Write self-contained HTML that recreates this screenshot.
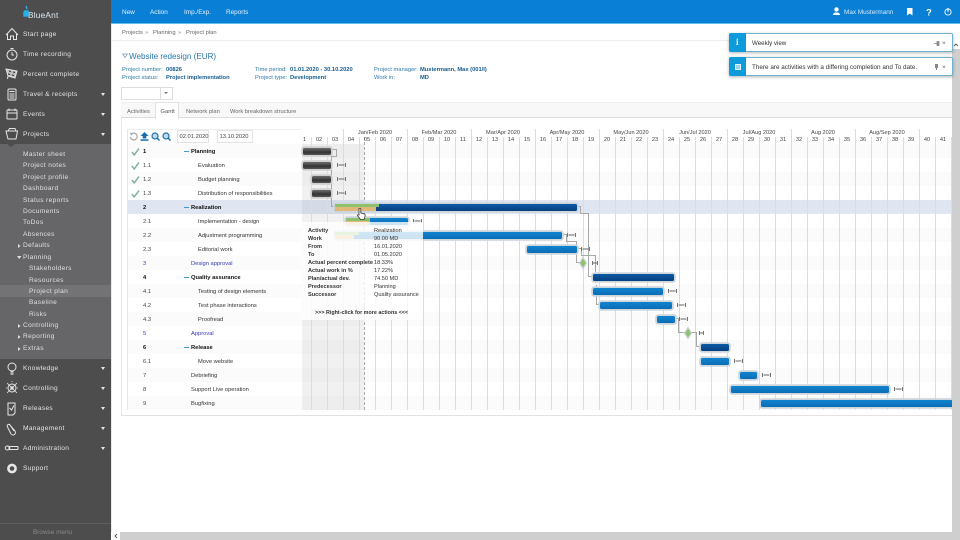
<!DOCTYPE html>
<html><head><meta charset="utf-8"><title>BlueAnt</title>
<style>
html,body{margin:0;padding:0;width:960px;height:540px;overflow:hidden;background:#fff;font-family:"Liberation Sans",sans-serif;}
#r{position:relative;width:960px;height:540px;overflow:hidden;}
.a,.t,.m,.s,.n,.l,.v,.w,.o,.b,.x{position:absolute;white-space:nowrap;}
.t{font-size:6.4px;line-height:8px;color:#333;}
.i{font-size:5.75px;margin-top:.5px}
.m{left:23px;font-size:6.6px;line-height:10px;color:#e4e4e4;letter-spacing:.32px;margin-top:1px}
.s{font-size:6.6px;line-height:10px;color:#e0e0e0;letter-spacing:.36px;margin-top:1px}
.c{position:absolute;left:101px;width:0;height:0;border-left:2.5px solid transparent;border-right:2.5px solid transparent;border-top:3px solid #dfeaf5;margin-top:1px}
.n{left:143px;font-size:5.8px;line-height:8px;color:#444;margin-top:1px}
.l{font-size:5.75px;line-height:8px;color:#333;margin-top:1px}
.h{font-weight:bold;color:#111;}
.p{color:#3838b8;}
.d{position:absolute;left:184px;width:5px;height:1.4px;background:#3a9ad2;margin-top:.5px}
.w{top:136px;width:16px;text-align:center;font-size:5.7px;line-height:8px;color:#444;}
.o{top:129px;width:64px;text-align:center;font-size:5.6px;line-height:8px;color:#444;}
.b{height:7px;margin-top:-.5px;border-radius:1.5px;box-shadow:0 0 0 1.8px #cdd5dc;background:linear-gradient(#1284cf,#0a6db5);}
.B{background:linear-gradient(#0c5aa6,#07407f);}
.g{background:linear-gradient(#6c6c6c,#333 60%,#555);box-shadow:0 0 0 1.8px #cfcfcf;}
.z{font-size:5.6px;line-height:8px;position:absolute;color:#333;margin-top:1px}
</style></head><body><div id="r">

<!-- sidebar -->
<div class="a" style="left:0;top:0;width:111px;height:540px;background:#4d4d4d"></div>
<div class="a" style="left:0;top:144px;width:111px;height:215px;background:#666669"></div>
<div class="a" style="left:0;top:285px;width:111px;height:12px;background:#737376"></div>
<div class="a" style="left:7px;top:144px;width:0;height:0;border-left:4px solid transparent;border-right:4px solid transparent;border-top:3px solid #4d4d4d"></div>
<div class="a" style="left:0;top:523px;width:111px;height:1px;background:#5c5c5c"></div>

<div class="t" style="left:28px;top:10px;font-size:8.3px;line-height:11px;color:#dfe8ef;letter-spacing:.2px">BlueAnt</div>
<svg class="a" style="left:23px;top:5px" width="7" height="13"><path d="M3 1 L4 4 M1 7 L1 11 L5 11 L5 6 L2 6Z" stroke="#25b0e8" stroke-width="1.4" fill="#25b0e8"/></svg>

<svg class="a" style="left:0;top:0" width="24" height="490" fill="none" stroke="#e6e6e6" stroke-width="1">
<path d="M6 35 L12 28.5 L18 35 M7.5 34 V39.5 H10.5 V36 H13.5 V39.5 H16.5 V34"/>
<circle cx="12" cy="55" r="5"/><path d="M12 52 V55 H14 M10.5 48.5 H13.5"/>
<path d="M6 69 L17 71 L15 78 L8 76 Z M8 76 L7.5 79" fill="#bbb"/><path d="M9 71 l2 .5 M13 72 l2 .5 M8 74 l2 .5 M12 75 l2 .5" stroke="#333"/>
<rect x="8" y="89" width="8" height="11" rx="1"/><path d="M9.5 91.5 H14.5 M9.5 94 H14.5 M9.5 96 H14.5 M9.5 98 H14.5" stroke-width="1"/>
<rect x="7" y="110" width="10" height="9" rx=".5"/><path d="M7 113 H17 M9 108.5 V111 M15 108.5 V111"/>
<path d="M6 131 H17.5 L16 139 H8 Z M8 131 L9.5 128.5 H15 L16 131"/>
<circle cx="12" cy="367" r="4"/><path d="M10.5 372 H13.5 M10.5 374 H13.5" stroke-width="1.2"/>
<circle cx="12" cy="388" r="4"/><circle cx="12" cy="388" r="1.2" fill="#e6e6e6"/><path d="M7 383 L17 393 M17 383 L7 393 M12 382 V381 M6 388 H7 M17 388 H18" stroke-width=".8"/>
<path d="M8 403 H15 V413 L13 415 H8 Z"/><path d="M9.5 408 L11.5 410 L14 405.5"/>
<path d="M9 424 L15 431 A2.5 2.5 0 0 1 11 434 L7.5 427 A1.5 1.5 0 0 1 10 425 L14 431"/>
<rect x="9" y="446.5" width="9" height="3" rx=".5"/><ellipse cx="7.5" cy="448" rx="2.3" ry="2"/>
<circle cx="12" cy="468.5" r="3.6" stroke-width="2.6"/>
</svg>

<div class="m" style="top:29px">Start page</div>
<div class="m" style="top:49px">Time recording</div>
<div class="m" style="top:69px">Percent complete</div>
<div class="m" style="top:89px">Travel &amp; receipts</div><div class="c" style="top:92px"></div>
<div class="m" style="top:109px">Events</div><div class="c" style="top:112px"></div>
<div class="m" style="top:129px">Projects</div><div class="c" style="top:132px"></div>

<div class="s" style="left:23px;top:149px">Master sheet</div>
<div class="s" style="left:23px;top:160px">Project notes</div>
<div class="s" style="left:23px;top:172px">Project profile</div>
<div class="s" style="left:23px;top:183px">Dashboard</div>
<div class="s" style="left:23px;top:195px">Status reports</div>
<div class="s" style="left:23px;top:206px">Documents</div>
<div class="s" style="left:23px;top:217px">ToDos</div>
<div class="s" style="left:23px;top:229px">Absences</div>
<div class="s" style="left:23px;top:240px">Defaults</div>
<div class="s" style="left:23px;top:252px">Planning</div>
<div class="s" style="left:29px;top:263px">Stakeholders</div>
<div class="s" style="left:29px;top:275px">Resources</div>
<div class="s" style="left:29px;top:286px">Project plan</div>
<div class="s" style="left:29px;top:297px">Baseline</div>
<div class="s" style="left:29px;top:309px">Risks</div>
<div class="s" style="left:23px;top:320px">Controlling</div>
<div class="s" style="left:23px;top:331px">Reporting</div>
<div class="s" style="left:23px;top:343px">Extras</div>
<svg class="a" style="left:16px;top:241px" width="6" height="112" fill="#ddd">
<path d="M2 3 L4.5 5 L2 7Z M1 15 L5.5 15 L3.2 18Z M2 83 L4.5 85 L2 87Z M2 94 L4.5 96 L2 98Z M2 106 L4.5 108 L2 110Z"/></svg>

<div class="m" style="top:363px">Knowledge</div><div class="c" style="top:366px"></div>
<div class="m" style="top:383px">Controlling</div><div class="c" style="top:386px"></div>
<div class="m" style="top:403px">Releases</div><div class="c" style="top:406px"></div>
<div class="m" style="top:423px">Management</div><div class="c" style="top:426px"></div>
<div class="m" style="top:443px">Administration</div><div class="c" style="top:446px"></div>
<div class="m" style="top:463px">Support</div>
<div class="t" style="left:33px;top:529px;color:#8a8a8a;font-size:6.4px">Browse menu</div>

<!-- topbar -->
<div class="a" style="left:111px;top:0;width:849px;height:23px;background:#0a7fd6"></div>
<div class="a" style="left:111px;top:23px;width:849px;height:1px;background:#5fc0e8"></div>
<div class="t" style="left:122px;top:8.5px;color:#e8f3fb">New</div>
<div class="t" style="left:150px;top:8.5px;color:#e8f3fb">Action</div>
<div class="t" style="left:184px;top:8.5px;color:#e8f3fb">Imp./Exp.</div>
<div class="t" style="left:226px;top:8.5px;color:#e8f3fb">Reports</div>
<div class="t" style="left:844px;top:8.5px;color:#d6eaf8">Max Mustermann</div>
<svg class="a" style="left:830px;top:5px" width="125" height="14" fill="#fff">
<circle cx="6.5" cy="4.5" r="2.2"/><path d="M3 10 Q3 7.5 6.5 7.5 Q10 7.5 10 10Z"/>
<path d="M77 3 H82.5 V10.5 L79.7 8.5 L77 10.5Z"/>
<text x="96" y="10.5" font-size="9.5" font-weight="bold" font-family="Liberation Sans">?</text>
<circle cx="118" cy="7" r="3.1" fill="none" stroke="#fff" stroke-width=".9"/><path d="M118 3 V7" stroke="#fff" stroke-width="1"/>
</svg>

<!-- main -->
<div class="a" style="left:111px;top:24px;width:1px;height:508px;background:#e8e8e8"></div>
<div class="t" style="left:122px;top:28.5px;color:#666;font-size:5.8px">Projects</div>
<div class="t" style="left:145px;top:28.5px;color:#888;font-size:5.8px">»</div>
<div class="t" style="left:153px;top:28.5px;color:#666;font-size:5.8px">Planning</div>
<div class="t" style="left:178px;top:28.5px;color:#888;font-size:5.8px">»</div>
<div class="t" style="left:186px;top:28.5px;color:#666;font-size:5.8px">Project plan</div>
<div class="a" style="left:112px;top:40px;width:840px;height:1px;background:#ececec"></div>

<svg class="a" style="left:122px;top:53px" width="6" height="6"><path d="M.5 1 H5.5 L3 4.5Z" fill="none" stroke="#7a9bb5" stroke-width=".7"/></svg>
<div class="t" style="left:129px;top:50.5px;font-size:8.1px;line-height:11px;color:#2a78ad">Website redesign (EUR)</div>

<div class="t i" style="left:122px;top:65px;color:#2f7aa8">Project number:</div>
<div class="t i" style="left:166px;top:65px;color:#145c8f;font-weight:bold">00826</div>
<div class="t i" style="left:122px;top:73px;color:#2f7aa8">Project status:</div>
<div class="t i" style="left:166px;top:73px;color:#145c8f;font-weight:bold">Project implementation</div>
<div class="t i" style="left:255px;top:65px;color:#2f7aa8">Time period:</div>
<div class="t i" style="left:290px;top:65px;color:#145c8f;font-weight:bold">01.01.2020 - 30.10.2020</div>
<div class="t i" style="left:255px;top:73px;color:#2f7aa8">Project type:</div>
<div class="t i" style="left:290px;top:73px;color:#145c8f;font-weight:bold">Development</div>
<div class="t i" style="left:374px;top:65px;color:#2f7aa8">Project manager:</div>
<div class="t i" style="left:420px;top:65px;color:#145c8f;font-weight:bold">Mustermann, Max (001/I)</div>
<div class="t i" style="left:374px;top:73px;color:#2f7aa8">Work in:</div>
<div class="t i" style="left:420px;top:73px;color:#145c8f;font-weight:bold">MD</div>

<div class="a" style="left:121px;top:87px;width:50px;height:11px;border:1px solid #ddd;background:#fff"></div>
<div class="a" style="left:160px;top:87px;width:1px;height:12px;background:#ddd"></div>
<div class="a" style="left:164px;top:92px;width:0;height:0;border-left:2px solid transparent;border-right:2px solid transparent;border-top:2.5px solid #777"></div>

<!-- tabs and panel -->
<div class="a" style="left:121px;top:102px;width:831px;height:16px;background:#f8f8f8;border-top:1px solid #eee;box-sizing:border-box;border-bottom:1px solid #ddd"></div>
<div class="a" style="left:121px;top:118px;width:1px;height:297px;background:#e6e6e6"></div>
<div class="a" style="left:121px;top:415px;width:831px;height:1px;background:#e2e2e2"></div>
<div class="a" style="left:155px;top:102px;width:24px;height:17px;background:#fff;border:1px solid #e0e0e0;border-bottom:none;box-sizing:border-box"></div>
<div class="t" style="left:127px;top:106px;color:#666;font-size:5.8px;margin-top:1.5px">Activities</div>
<div class="t" style="left:160.5px;top:106px;color:#555;font-size:5.8px;margin-top:1.5px">Gantt</div>
<div class="t" style="left:186px;top:106px;color:#666;font-size:5.8px;margin-top:1.5px">Network plan</div>
<div class="t" style="left:230px;top:106px;color:#666;font-size:5.7px;margin-top:1.5px">Work breakdown structure</div>

<!-- gantt background -->
<div class="a" style="left:127px;top:129px;width:1px;height:281px;background:#e8e8e8"></div>
<div class="a" style="left:128px;top:129px;width:173px;height:1px;background:#eee"></div>
<div class="a" style="left:128px;top:144px;width:824px;height:266px;background:repeating-linear-gradient(#fbfbfb 0 14px,#fff 14px 28px)"></div>
<div class="a" style="left:128px;top:200px;width:824px;height:14px;background:#dfe6f2"></div>
<div class="a" style="left:302px;top:144px;width:62px;height:266px;background:rgba(120,120,130,.1)"></div>
<div class="a" style="left:311px;top:137px;width:641px;height:273px;background:repeating-linear-gradient(90deg,#dcdcdc 0 1px,transparent 1px 16px)"></div>
<div class="a" style="left:343px;top:129px;width:609px;height:8px;background:repeating-linear-gradient(90deg,#dcdcdc 0 1px,transparent 1px 64px)"></div>
<div class="a" style="left:364px;top:137px;width:0;height:273px;border-left:1px dashed #aaa"></div>

<!-- toolbar -->
<svg class="a" style="left:128px;top:131px" width="48" height="11">
<path d="M3.5 3 A3.4 3.4 0 1 1 2.4 6" fill="none" stroke="#aaa" stroke-width="1.3"/><path d="M1.5 1.8 L4.8 2 L3.5 4.8Z" fill="#aaa"/>
<path d="M16.5 1 L20.5 5 H18.3 V7.5 H14.7 V5 H12.5Z" fill="#1570b0"/><rect x="12.5" y="8.3" width="8" height="1.5" fill="#1570b0"/>
<circle cx="27" cy="5" r="3" fill="#bcdcf0" stroke="#1a6fa8" stroke-width="1.2"/><path d="M29 7 L31.5 9.5" stroke="#1a6fa8" stroke-width="1.5"/>
<circle cx="38" cy="5" r="3" fill="#bcdcf0" stroke="#1a6fa8" stroke-width="1.2"/><path d="M40 7 L42.5 9.5" stroke="#1a6fa8" stroke-width="1.5"/>
</svg>
<div class="a" style="left:177px;top:130px;width:30px;height:11px;border:1px solid #e2e2e2;background:#fff"></div>
<div class="a" style="left:217px;top:130px;width:34px;height:11px;border:1px solid #e2e2e2;background:#fff"></div>
<div class="t" style="left:179.5px;top:133px;font-size:5.8px;color:#444">02.01.2020</div>
<div class="t" style="left:219.5px;top:133px;font-size:5.8px;color:#444">13.10.2020</div>

<!-- table -->
<svg class="a" style="left:130.5px;top:146.5px" width="10" height="54" fill="none" stroke="#86b49e" stroke-width="1.5">
<path d="M1 5 L3.2 8 L8 1.5"/><path d="M1 19 L3.2 22 L8 15.5"/><path d="M1 33 L3.2 36 L8 29.5"/><path d="M1 47 L3.2 50 L8 43.5"/>
</svg>
<div class="n h" style="top:147px">1</div><div class="d" style="top:150.5px"></div><div class="l h" style="left:191px;top:147px">Planning</div>
<div class="n" style="top:161px">1.1</div><div class="l" style="left:198px;top:161px">Evaluation</div>
<div class="n" style="top:175px">1.2</div><div class="l" style="left:198px;top:175px">Budget planning</div>
<div class="n" style="top:189px">1.3</div><div class="l" style="left:198px;top:189px">Distribution of responsibilities</div>
<div class="n h" style="top:203px">2</div><div class="d" style="top:206.5px"></div><div class="l h" style="left:191px;top:203px">Realization</div>
<div class="n" style="top:217px">2.1</div><div class="l" style="left:198px;top:217px">Implementation - design</div>
<div class="n" style="top:231px">2.2</div><div class="l" style="left:198px;top:231px">Adjustment programming</div>
<div class="n" style="top:245px">2.3</div><div class="l" style="left:198px;top:245px">Editorial work</div>
<div class="n p" style="top:259px">3</div><div class="l p" style="left:191px;top:259px">Design approval</div>
<div class="n h" style="top:273px">4</div><div class="d" style="top:276.5px"></div><div class="l h" style="left:191px;top:273px">Quality assurance</div>
<div class="n" style="top:287px">4.1</div><div class="l" style="left:198px;top:287px">Testing of design elements</div>
<div class="n" style="top:301px">4.2</div><div class="l" style="left:198px;top:301px">Test phase interactions</div>
<div class="n" style="top:315px">4.3</div><div class="l" style="left:198px;top:315px">Proofread</div>
<div class="n p" style="top:329px">5</div><div class="l p" style="left:191px;top:329px">Approval</div>
<div class="n h" style="top:343px">6</div><div class="d" style="top:346.5px"></div><div class="l h" style="left:191px;top:343px">Release</div>
<div class="n" style="top:357px">6.1</div><div class="l" style="left:198px;top:357px">Move website</div>
<div class="n" style="top:371px">7</div><div class="l" style="left:191px;top:371px">Debriefing</div>
<div class="n" style="top:385px">8</div><div class="l" style="left:191px;top:385px">Support Live operation</div>
<div class="n" style="top:399px">9</div><div class="l" style="left:191px;top:399px">Bugfixing</div>

<!-- header weeks -->
<div class="o" style="left:343px">Jan/Feb 2020</div><div class="o" style="left:407px">Feb/Mar 2020</div><div class="o" style="left:471px">Mar/Apr 2020</div><div class="o" style="left:535px">Apr/May 2020</div><div class="o" style="left:599px">May/Jun 2020</div><div class="o" style="left:663px">Jun/Jul 2020</div><div class="o" style="left:727px">Jul/Aug 2020</div><div class="o" style="left:791px">Aug 2020</div><div class="o" style="left:855px">Aug/Sep 2020</div>
<div class="w" style="left:295px;clip-path:inset(0 0 0 8px)">01</div><div class="w" style="left:311px">02</div><div class="w" style="left:327px">03</div><div class="w" style="left:343px">04</div><div class="w" style="left:359px">05</div><div class="w" style="left:375px">06</div><div class="w" style="left:391px">07</div><div class="w" style="left:407px">08</div><div class="w" style="left:423px">09</div><div class="w" style="left:439px">10</div><div class="w" style="left:455px">11</div><div class="w" style="left:471px">12</div><div class="w" style="left:487px">13</div><div class="w" style="left:503px">14</div><div class="w" style="left:519px">15</div><div class="w" style="left:535px">16</div><div class="w" style="left:551px">17</div><div class="w" style="left:567px">18</div><div class="w" style="left:583px">19</div><div class="w" style="left:599px">20</div><div class="w" style="left:615px">21</div><div class="w" style="left:631px">22</div><div class="w" style="left:647px">23</div><div class="w" style="left:663px">24</div><div class="w" style="left:679px">25</div><div class="w" style="left:695px">26</div><div class="w" style="left:711px">27</div><div class="w" style="left:727px">28</div><div class="w" style="left:743px">29</div><div class="w" style="left:759px">30</div><div class="w" style="left:775px">31</div><div class="w" style="left:791px">32</div><div class="w" style="left:807px">33</div><div class="w" style="left:823px">34</div><div class="w" style="left:839px">35</div><div class="w" style="left:855px">36</div><div class="w" style="left:871px">37</div><div class="w" style="left:887px">38</div><div class="w" style="left:903px">39</div><div class="w" style="left:919px">40</div><div class="w" style="left:935px">41</div>

<!-- connectors and markers -->
<svg class="a" style="left:300px;top:140px" width="652" height="272" fill="none" stroke="#a8a8a8" stroke-width="1" shape-rendering="crispEdges">
<path d="M32 9.5 H36.5 V16.5 H31.5 V66.5 H34"/>
<path d="M277 66.5 H280.5 V73.5 H288.5 V136.5 H293"/>
<path d="M262 94.5 H266.5 V101.5 H276.5 V122.5 H281"/>
<path d="M277 108.5 H281.5 V115.5 H295.5 V132"/>
<path d="M296.5 145 V164.5 H300"/>
<path d="M375 178.5 H378.5 V192.5 H385"/>
<path d="M391 192.5 H396.5 V206.5 H400"/>
<g stroke="#666" stroke-width=".9" shape-rendering="auto">
<path d="M37.5 23 v4 M45.5 23 v4 M38.5 25 h6 M37.5 37 v4 M45.5 37 v4 M38.5 39 h6 M37.5 51 v4 M45.5 51 v4 M38.5 53 h6"/>
<path d="M113.5 79 v4 M121.5 79 v4 M114.5 81 h6"/>
<path d="M267.5 93 v4 M275.5 93 v4 M268.5 95 h6"/>
<path d="M281.5 107 v4 M289.5 107 v4 M282.5 109 h6"/>
<path d="M292.5 121 v4 M297.5 121 v4 M293 123 h4"/>
<path d="M368.5 149 v4 M376.5 149 v4 M369.5 151 h6"/>
<path d="M377.5 163 v4 M385.5 163 v4 M378.5 165 h6"/>
<path d="M379.5 177 v4 M387.5 177 v4 M380.5 179 h6"/>
<path d="M399.5 191 v4 M403.5 191 v4 M400 193 h3"/>
<path d="M434.5 219 v4 M442.5 219 v4 M435.5 221 h6"/>
<path d="M462.5 233 v4 M470.5 233 v4 M463.5 235 h6"/>
<path d="M594.5 247 v4 M602.5 247 v4 M595.5 249 h6"/>
</g>
</svg>

<!-- bars -->
<div class="b g" style="left:303px;top:148px;width:28px"></div>
<div class="b g" style="left:303px;top:162px;width:28px"></div>
<div class="b g" style="left:312px;top:176px;width:19px"></div>
<div class="b g" style="left:312px;top:190px;width:19px"></div>
<div class="b B" style="left:335px;top:204px;width:242px"></div>
<div class="a" style="left:335px;top:203.5px;width:44px;height:3.5px;background:#8fc06e;border-radius:1.5px 0 0 0"></div>
<div class="a" style="left:335px;top:207px;width:41px;height:3.5px;background:#e0b87a;border-radius:0 0 0 1.5px"></div>
<div class="b" style="left:346px;top:218px;width:62px"></div>
<div class="a" style="left:346px;top:217.5px;width:24px;height:3.5px;background:#8fc06e"></div>
<div class="a" style="left:346px;top:221px;width:24px;height:3.5px;background:#e0b87a"></div>
<div class="b" style="left:335px;top:232px;width:227px"></div>
<div class="a" style="left:335px;top:231.5px;width:24px;height:3.5px;background:#8fc06e"></div>
<div class="a" style="left:335px;top:235px;width:19px;height:3.5px;background:#e0b87a"></div>
<div class="b" style="left:527px;top:246px;width:50px"></div>
<div class="b B" style="left:593px;top:274px;width:81px"></div>
<div class="b" style="left:593px;top:288px;width:70px"></div>
<div class="b" style="left:600px;top:302px;width:72px"></div>
<div class="b" style="left:657px;top:316px;width:18px"></div>
<div class="b B" style="left:701px;top:344px;width:28px"></div>
<div class="b" style="left:701px;top:358px;width:28px"></div>
<div class="b" style="left:740px;top:372px;width:17px"></div>
<div class="b" style="left:731px;top:386px;width:158px"></div>
<div class="b" style="left:761px;top:400px;width:191px;border-radius:1.5px 0 0 1.5px"></div>

<svg class="a" style="left:578px;top:256px" width="12" height="14"><path d="M5 1.5 L8.5 7 L5 12.5 L1.5 7Z" fill="#8fc06e" stroke="#ccd4d8" stroke-width="1.2"/></svg>
<svg class="a" style="left:683px;top:326px" width="12" height="14"><path d="M5 1.5 L8.5 7 L5 12.5 L1.5 7Z" fill="#8fc06e" stroke="#ccd4d8" stroke-width="1.2"/></svg>

<!-- tooltip -->
<div class="a" style="left:302px;top:222px;width:121px;height:98px;background:rgba(255,255,255,.8)"></div>
<div class="z" style="left:308px;top:226px;font-weight:bold">Activity</div><div class="z" style="left:374px;top:226px">Realization</div>
<div class="z" style="left:308px;top:234px;font-weight:bold">Work</div><div class="z" style="left:374px;top:234px">90.00 MD</div>
<div class="z" style="left:308px;top:242px;font-weight:bold">From</div><div class="z" style="left:374px;top:242px">16.01.2020</div>
<div class="z" style="left:308px;top:250px;font-weight:bold">To</div><div class="z" style="left:374px;top:250px">01.05.2020</div>
<div class="z" style="left:308px;top:258px;font-weight:bold">Actual percent complete</div><div class="z" style="left:374px;top:258px">18.33%</div>
<div class="z" style="left:308px;top:266px;font-weight:bold">Actual work in %</div><div class="z" style="left:374px;top:266px">17.22%</div>
<div class="z" style="left:308px;top:274px;font-weight:bold">Plan/actual dev.</div><div class="z" style="left:374px;top:274px">74.50 MD</div>
<div class="z" style="left:308px;top:282px;font-weight:bold">Predecessor</div><div class="z" style="left:374px;top:282px">Planning</div>
<div class="z" style="left:308px;top:290px;font-weight:bold">Successor</div><div class="z" style="left:374px;top:290px">Quality assurance</div>
<div class="z" style="left:315px;top:307.5px;font-weight:bold;font-size:5.4px">&gt;&gt;&gt; Right-click for more actions &lt;&lt;&lt;</div>

<!-- cursor -->
<svg class="a" style="left:355.5px;top:206.5px" width="11" height="14"><path d="M3 1.5 Q4.3 .8 4.8 2 V6 L8.5 7 Q9.5 7.5 9 9.5 L8 12.5 H4.5 L1.5 8.5 Q1.5 7.3 3 8 Z" fill="#fff" stroke="#333" stroke-width=".8"/></svg>

<!-- scrollbars -->
<div class="a" style="left:952px;top:41px;width:8px;height:499px;background:#cfcfcf"></div>
<div class="a" style="left:952px;top:41px;width:8px;height:8px;background:#fff"></div>
<svg class="a" style="left:953px;top:42px" width="6" height="6"><path d="M1 4 L3 2 L5 4" fill="none" stroke="#555" stroke-width=".9"/></svg>
<div class="a" style="left:120px;top:532px;width:832px;height:8px;background:#cfcfcf"></div>
<svg class="a" style="left:113px;top:533px" width="6" height="6"><path d="M4 1 L2 3 L4 5" fill="none" stroke="#555" stroke-width=".9"/></svg>

<!-- notifications -->
<div class="a" style="left:729px;top:33px;width:224px;height:19px;background:#fff;border:1px solid #6db2d0;box-sizing:border-box;border-radius:2px;box-shadow:0 1px 3px rgba(0,0,0,.3)"></div>
<div class="a" style="left:729px;top:33px;width:17px;height:19px;background:#0e9bdc;border-radius:2px 0 0 2px"></div>
<div class="t" style="left:736px;top:38px;color:#fff;font-weight:bold;font-family:'Liberation Serif',serif;font-size:9px">i</div>
<div class="t" style="left:752px;top:39.5px;color:#333;font-size:6.2px">Weekly view</div>
<svg class="a" style="left:934px;top:41px" width="6" height="5"><path d="M0 2.5 H3 M3 .5 H5 V4.5 H3Z" stroke="#888" stroke-width=".8" fill="#888"/></svg>
<div class="t" style="left:942px;top:39.5px;color:#666;font-size:6.5px">×</div>

<div class="a" style="left:729px;top:57px;width:224px;height:19px;background:#fff;border:1px solid #6db2d0;box-sizing:border-box;border-radius:2px;box-shadow:0 1px 3px rgba(0,0,0,.3)"></div>
<div class="a" style="left:729px;top:57px;width:17px;height:19px;background:#0e9bdc;border-radius:2px 0 0 2px"></div>
<svg class="a" style="left:734px;top:63px" width="8" height="8"><rect x="1" y="1" width="6" height="6" fill="#e4f3fb"/><path d="M2 3 H6 M2 5 H6" stroke="#0e9bdc" stroke-width=".8"/></svg>
<div class="t" style="left:752px;top:63.5px;color:#333;font-size:6.35px">There are activities with a differing completion and To date.</div>
<div class="a" style="left:935px;top:64px;width:3px;height:4px;background:#888"></div>
<div class="a" style="left:936px;top:68px;width:1px;height:2px;background:#888"></div>
<div class="t" style="left:942px;top:63.5px;color:#666;font-size:6.5px">×</div>

</div></body></html>
